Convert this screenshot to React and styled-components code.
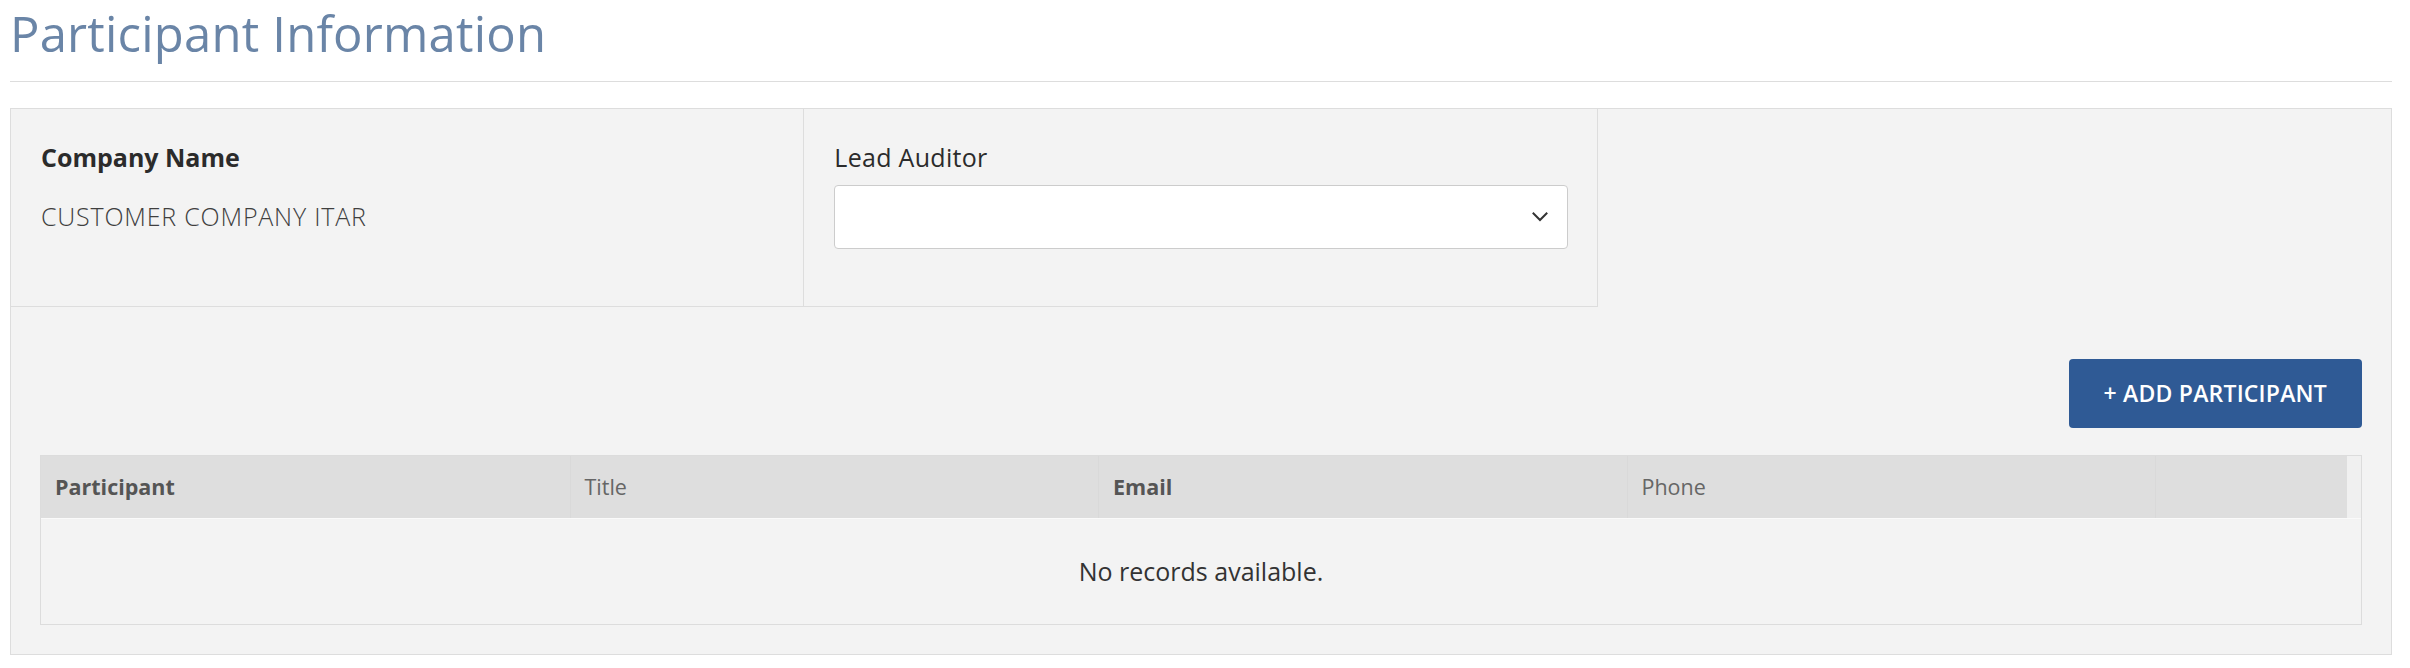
import React from "react";
import styled, { createGlobalStyle } from "styled-components";

const GlobalStyle = createGlobalStyle`
  html, body {
    margin: 0;
    padding: 0;
    background: #ffffff;
  }
  body {
    font-family: "Open Sans", "Noto Sans", "Liberation Sans", sans-serif;
    color: #333333;
  }
  * { box-sizing: border-box; }
`;

const Page = styled.div`
  padding: 0 18px 0 10px;
`;

const PageTitle = styled.h1`
  margin: 0;
  font-size: 49px;
  font-weight: 400;
  letter-spacing: 0.2px;
  line-height: 67px;
  color: #6a85a7;
`;

const Divider = styled.hr`
  margin: 14px 0 0;
  border: 0;
  height: 1px;
  background: #dddddd;
`;

const Panel = styled.section`
  margin-top: 26px;
  border: 1px solid #dddddd;
  background: #f3f3f3;
`;

const InfoGrid = styled.div`
  display: grid;
  grid-template-columns: repeat(3, 1fr);
`;

const InfoCell = styled.div`
  padding: 30px 29px 57px 30px;
  border-right: ${(p) => (p.$bordered ? "1px solid #dddddd" : "0")};
  border-bottom: ${(p) => (p.$bordered ? "1px solid #dddddd" : "0")};
`;

const FieldLabel = styled.div`
  font-size: 25px;
  line-height: 37.5px;
  font-weight: ${(p) => (p.$bold ? 700 : 400)};
  letter-spacing: ${(p) => (p.$bold ? "0" : "0.3px")};
  color: #2b2b2b;
  margin-bottom: ${(p) => p.$gap}px;
`;

const FieldValue = styled.div`
  font-size: 25px;
  line-height: 37.5px;
  font-weight: 300;
  letter-spacing: 0.8px;
  color: #3f3f3f;
`;

const SelectBox = styled.div`
  height: 64px;
  background: #ffffff;
  border: 1px solid #cccccc;
  border-radius: 4px;
  display: flex;
  align-items: center;
  justify-content: flex-end;
  padding-right: 19px;
`;

const ListSection = styled.div`
  padding: 52px 29px 29px 29px;
`;

const Toolbar = styled.div`
  display: flex;
  justify-content: flex-end;
  margin-bottom: 27px;
`;

const PrimaryButton = styled.button`
  height: 69px;
  padding: 0 35px;
  border: 0;
  border-radius: 4px;
  background: #2f5a95;
  color: #ffffff;
  font-family: "Open Sans", "Noto Sans", sans-serif;
  font-size: 23px;
  font-weight: 600;
  letter-spacing: 0.2px;
  cursor: pointer;
`;

const Table = styled.div`
  border: 1px solid #dcdcdc;
  background: #f3f3f3;
`;

const HeaderRow = styled.div`
  display: flex;
  border-bottom: 1px solid #fafafa;
`;

const HeaderCells = styled.div`
  flex: 1;
  display: grid;
  grid-template-columns: repeat(4, 1fr) 192px;
  background: #dedede;
  height: 62px;
`;

const Gutter = styled.div`
  width: 14px;
  background: #f0f0f0;
`;

const HeaderCell = styled.div`
  display: flex;
  align-items: center;
  padding-left: 14px;
  font-size: 21.5px;
  font-weight: ${(p) => (p.$bold ? 700 : 400)};
  color: ${(p) => (p.$bold ? "#555555" : "#666666")};
  border-left: ${(p) => (p.$first ? "0" : "1px solid #d9d9d9")};
`;

const EmptyBody = styled.div`
  height: 105px;
  display: flex;
  align-items: center;
  justify-content: center;
  font-size: 25px;
  color: #333333;
`;

const Chevron = () => (
  <svg width="16" height="10" viewBox="0 0 16 10" fill="none">
    <path d="M1.5 1.5 L8 8 L14.5 1.5" stroke="#333" strokeWidth="2" strokeLinecap="square" />
  </svg>
);

const columns = [
  { label: "Participant", bold: true },
  { label: "Title", bold: false },
  { label: "Email", bold: true },
  { label: "Phone", bold: false },
  { label: "", bold: false },
];

export default function App() {
  return (
    <>
      <GlobalStyle />
      <Page>
        <PageTitle>Participant Information</PageTitle>
        <Divider />
        <Panel>
          <InfoGrid>
            <InfoCell $bordered>
              <FieldLabel $bold $gap={21}>Company Name</FieldLabel>
              <FieldValue>CUSTOMER COMPANY ITAR</FieldValue>
            </InfoCell>
            <InfoCell $bordered>
              <FieldLabel $gap={8}>Lead Auditor</FieldLabel>
              <SelectBox>
                <Chevron />
              </SelectBox>
            </InfoCell>
            <InfoCell />
          </InfoGrid>
          <ListSection>
            <Toolbar>
              <PrimaryButton>+ ADD PARTICIPANT</PrimaryButton>
            </Toolbar>
            <Table>
              <HeaderRow>
                <HeaderCells>
                  {columns.map((c, i) => (
                    <HeaderCell key={i} $bold={c.bold} $first={i === 0}>
                      {c.label}
                    </HeaderCell>
                  ))}
                </HeaderCells>
                <Gutter />
              </HeaderRow>
              <EmptyBody>No records available.</EmptyBody>
            </Table>
          </ListSection>
        </Panel>
      </Page>
    </>
  );
}
